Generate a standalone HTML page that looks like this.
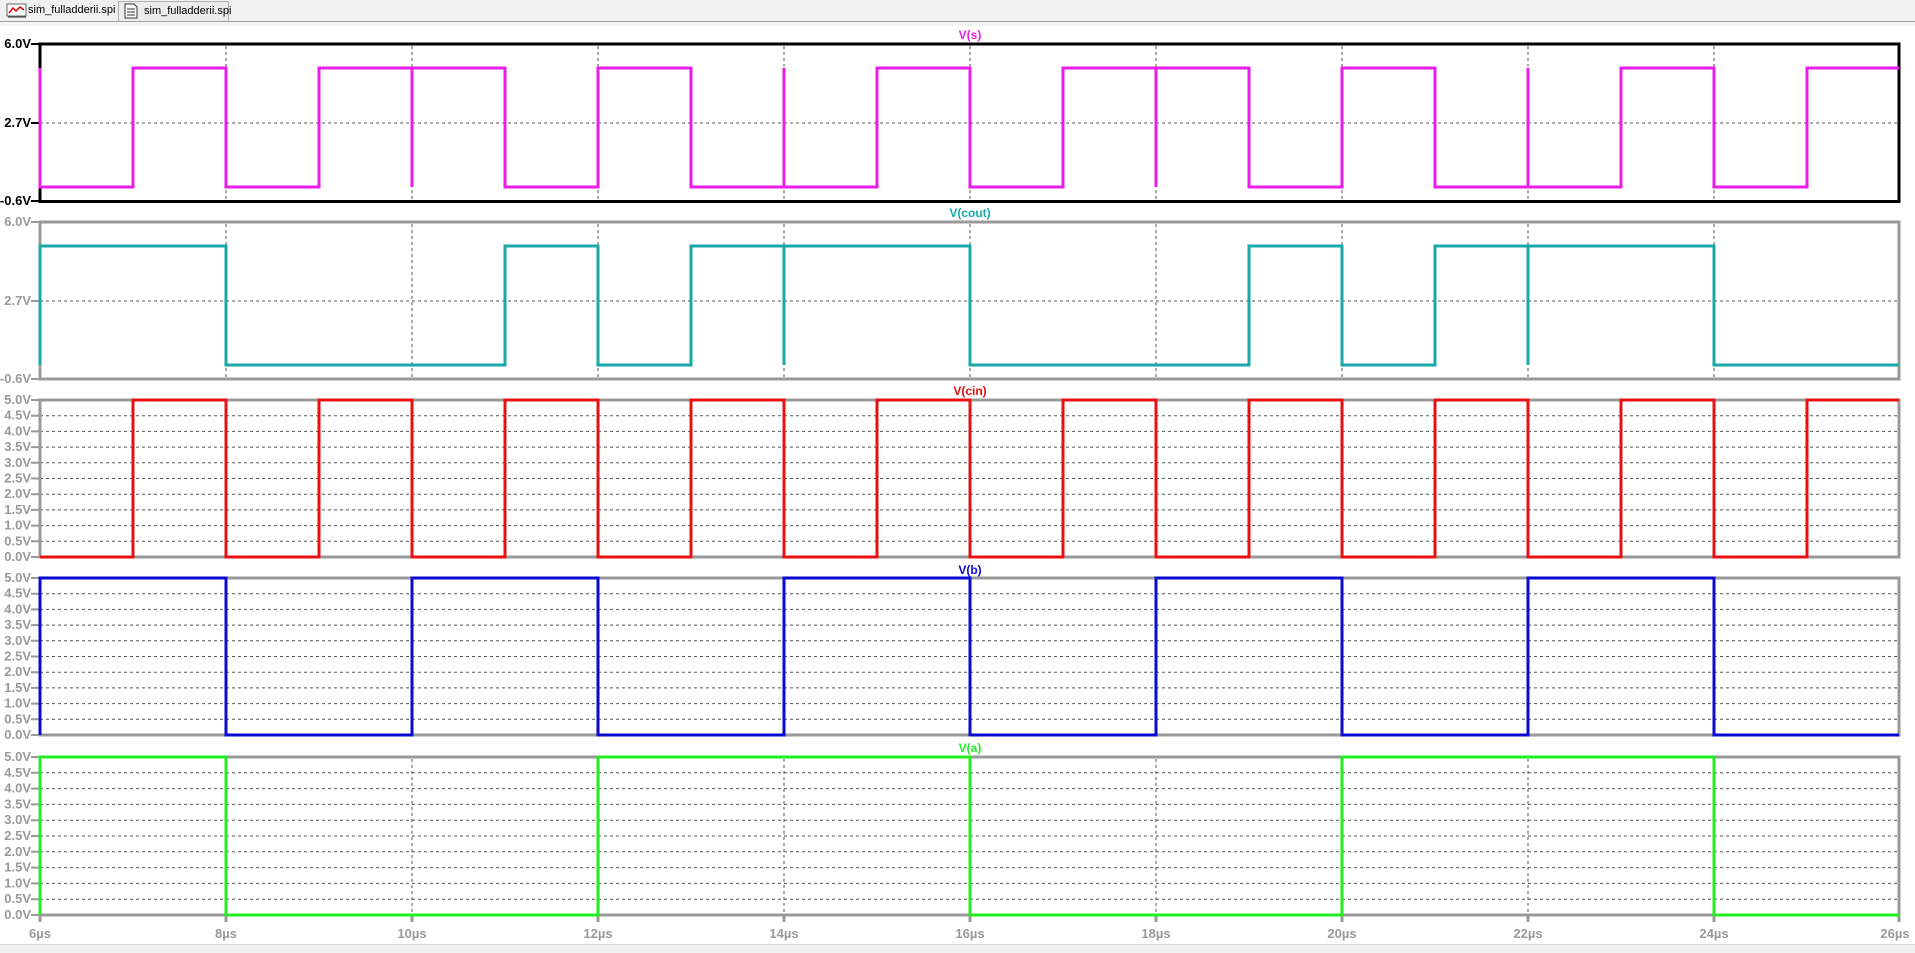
<!DOCTYPE html>
<html><head><meta charset="utf-8"><style>
html,body{margin:0;padding:0;width:1915px;height:952px;overflow:hidden;background:#fff;font-family:"Liberation Sans",sans-serif}
#tabs{position:absolute;left:0;top:0;width:1915px;height:21px;background:#f0f0f0;border-bottom:1px solid #a0a0a0}
.tab{position:absolute;top:1px;height:19px;font-size:11px;line-height:19px;color:#000;white-space:nowrap}
#strip{position:absolute;left:0;top:22px;width:1915px;height:4px;background:#f4f4f4}
#status{position:absolute;left:0;top:944px;width:1915px;height:8px;background:#f0f0f0;border-top:1px solid #d8d8d8}
svg{position:absolute;left:0;top:0}
</style></head><body>
<div id="tabs">
 <div class="tab" style="left:2px;width:112px">
  <svg width="22" height="16" style="position:absolute;left:4px;top:2px"><rect x="1" y="1" width="19" height="12" fill="#fff" stroke="#666"/><path d="M3 10 L7 5 L10 8 L14 4 L18 7" fill="none" stroke="#d00" stroke-width="1.5"/><path d="M2 14 H20" stroke="#333"/></svg>
  <span style="position:absolute;left:26px">sim_fulladderii.spi</span></div>
 <div class="tab" style="left:118px;width:109px;border:1px solid #b0b0b0;border-bottom:none;background:#ececec">
  <svg width="16" height="16" style="position:absolute;left:4px;top:1px"><path d="M2 1 H11 L14 4 V15 H2 Z" fill="#fff" stroke="#333"/><path d="M4 6 H12 M4 9 H12 M4 12 H12" stroke="#333"/></svg>
  <span style="position:absolute;left:25px">sim_fulladderii.spi</span></div>
</div>
<div id="strip"></div>
<svg width="1915" height="952" style="top:0">
<g font-family="Liberation Sans, sans-serif" font-size="12" font-weight="bold" text-anchor="middle">
<text x="970" y="39" fill="#e81ee8">V(s)</text>
<text x="970" y="217" fill="#1aa8a8">V(cout)</text>
<text x="970" y="395" fill="#e01010">V(cin)</text>
<text x="970" y="574" fill="#0a0ad0">V(b)</text>
<text x="970" y="752" fill="#22ee22">V(a)</text>
</g>
<g stroke="#555" stroke-width="1" stroke-dasharray="3,3">
<path d="M226 46V200M412 46V200M598 46V200M784 46V200M970 46V200M1156 46V200M1342 46V200M1528 46V200M1714 46V200"/>
<path d="M226 224V378M412 224V378M598 224V378M784 224V378M970 224V378M1156 224V378M1342 224V378M1528 224V378M1714 224V378"/>
<path d="M226 402V556M412 402V556M598 402V556M784 402V556M970 402V556M1156 402V556M1342 402V556M1528 402V556M1714 402V556"/>
<path d="M226 580V734M412 580V734M598 580V734M784 580V734M970 580V734M1156 580V734M1342 580V734M1528 580V734M1714 580V734"/>
<path d="M226 759V914M412 759V914M598 759V914M784 759V914M970 759V914M1156 759V914M1342 759V914M1528 759V914M1714 759V914"/>
<path d="M40 123H1899M40 301H1899"/>
<path d="M40 415.7H1899M40 431.4H1899M40 447.1H1899M40 462.8H1899M40 478.5H1899M40 494.2H1899M40 509.9H1899M40 525.6H1899M40 541.3H1899"/>
<path d="M40 593.7H1899M40 609.4H1899M40 625.1H1899M40 640.8H1899M40 656.5H1899M40 672.2H1899M40 687.9H1899M40 703.6H1899M40 719.3H1899"/>
<path d="M40 772.8H1899M40 788.6H1899M40 804.4H1899M40 820.2H1899M40 836H1899M40 851.8H1899M40 867.6H1899M40 883.4H1899M40 899.2H1899"/>
</g>
<rect x="40" y="44" width="1859" height="157.5" fill="none" stroke="#000" stroke-width="3"/>
<g fill="none" stroke="#999" stroke-width="3">
<rect x="40" y="222" width="1859" height="157"/>
<rect x="40" y="400" width="1859" height="157"/>
<rect x="40" y="578" width="1859" height="157"/>
<rect x="40" y="757" width="1859" height="158"/>
</g>
<g font-family="Liberation Sans, sans-serif" font-size="13" font-weight="bold" text-anchor="end">
<g fill="#000" stroke="none"><text x="31" y="48">6.0V</text><text x="31" y="127">2.7V</text><text x="31" y="205">-0.6V</text></g>
<path d="M31 44H40M31 123H40M31 201H40" stroke="#000" stroke-width="2"/>
<g fill="#999"><text x="31" y="226">6.0V</text><text x="31" y="305">2.7V</text><text x="31" y="383">-0.6V</text></g>
<path d="M31 222H40M31 301H40M31 379H40" stroke="#999" stroke-width="2"/>
<g fill="#999">
<text x="31" y="404">5.0V</text><text x="31" y="419.7">4.5V</text><text x="31" y="435.4">4.0V</text><text x="31" y="451.1">3.5V</text><text x="31" y="466.8">3.0V</text><text x="31" y="482.5">2.5V</text><text x="31" y="498.2">2.0V</text><text x="31" y="513.9">1.5V</text><text x="31" y="529.6">1.0V</text><text x="31" y="545.3">0.5V</text><text x="31" y="561">0.0V</text>
<text x="31" y="582">5.0V</text><text x="31" y="597.7">4.5V</text><text x="31" y="613.4">4.0V</text><text x="31" y="629.1">3.5V</text><text x="31" y="644.8">3.0V</text><text x="31" y="660.5">2.5V</text><text x="31" y="676.2">2.0V</text><text x="31" y="691.9">1.5V</text><text x="31" y="707.6">1.0V</text><text x="31" y="723.3">0.5V</text><text x="31" y="739">0.0V</text>
<text x="31" y="761">5.0V</text><text x="31" y="776.8">4.5V</text><text x="31" y="792.6">4.0V</text><text x="31" y="808.4">3.5V</text><text x="31" y="824.2">3.0V</text><text x="31" y="840">2.5V</text><text x="31" y="855.8">2.0V</text><text x="31" y="871.6">1.5V</text><text x="31" y="887.4">1.0V</text><text x="31" y="903.2">0.5V</text><text x="31" y="919">0.0V</text>
</g>
<g stroke="#999" stroke-width="2">
<path d="M31 400H40M31 415.7H40M31 431.4H40M31 447.1H40M31 462.8H40M31 478.5H40M31 494.2H40M31 509.9H40M31 525.6H40M31 541.3H40M31 557H40"/>
<path d="M31 578H40M31 593.7H40M31 609.4H40M31 625.1H40M31 640.8H40M31 656.5H40M31 672.2H40M31 687.9H40M31 703.6H40M31 719.3H40M31 735H40"/>
<path d="M31 757H40M31 772.8H40M31 788.6H40M31 804.4H40M31 820.2H40M31 836H40M31 851.8H40M31 867.6H40M31 883.4H40M31 899.2H40M31 915H40"/>
<path d="M40 915V922M226 915V922M412 915V922M598 915V922M784 915V922M970 915V922M1156 915V922M1342 915V922M1528 915V922M1714 915V922M1899 915V922" stroke-width="3"/>
</g>
</g>
<g font-family="Liberation Sans, sans-serif" font-size="13" font-weight="bold" fill="#999" text-anchor="middle">
<text x="40" y="938">6µs</text><text x="226" y="938">8µs</text><text x="412" y="938">10µs</text><text x="598" y="938">12µs</text><text x="784" y="938">14µs</text><text x="970" y="938">16µs</text><text x="1156" y="938">18µs</text><text x="1342" y="938">20µs</text><text x="1528" y="938">22µs</text><text x="1714" y="938">24µs</text><text x="1895" y="938">26µs</text>
</g>
<g fill="none" stroke-width="3" stroke-linejoin="miter">
<path stroke="#e81ee8" d="M40 68V187H133V68H226V187H319V68H505V187H598V68H691V187H877V68H970V187H1063V68H1249V187H1342V68H1435V187H1621V68H1714V187H1807V68H1899M412 68V187M784 187V68M1156 68V187M1528 187V68"/>
<path stroke="#1aa8a8" d="M40 365V246H226V365H505V246H598V365H691V246H970V365H1249V246H1342V365H1435V246H1714V365H1899M784 246V365M1528 246V365"/>
<path stroke="#e81010" d="M40 557H133V400H226V557H319V400H412V557H505V400H598V557H691V400H784V557H877V400H970V557H1063V400H1156V557H1249V400H1342V557H1435V400H1528V557H1621V400H1714V557H1807V400H1899"/>
<path stroke="#0a0ad0" d="M40 735V578H226V735H412V578H598V735H784V578H970V735H1156V578H1342V735H1528V578H1714V735H1899"/>
<path stroke="#22ee22" d="M40 915V757H226V915H598V757H970V915H1342V757H1714V915H1899"/>
</g>
</svg>
<div id="status"></div>
</body></html>
